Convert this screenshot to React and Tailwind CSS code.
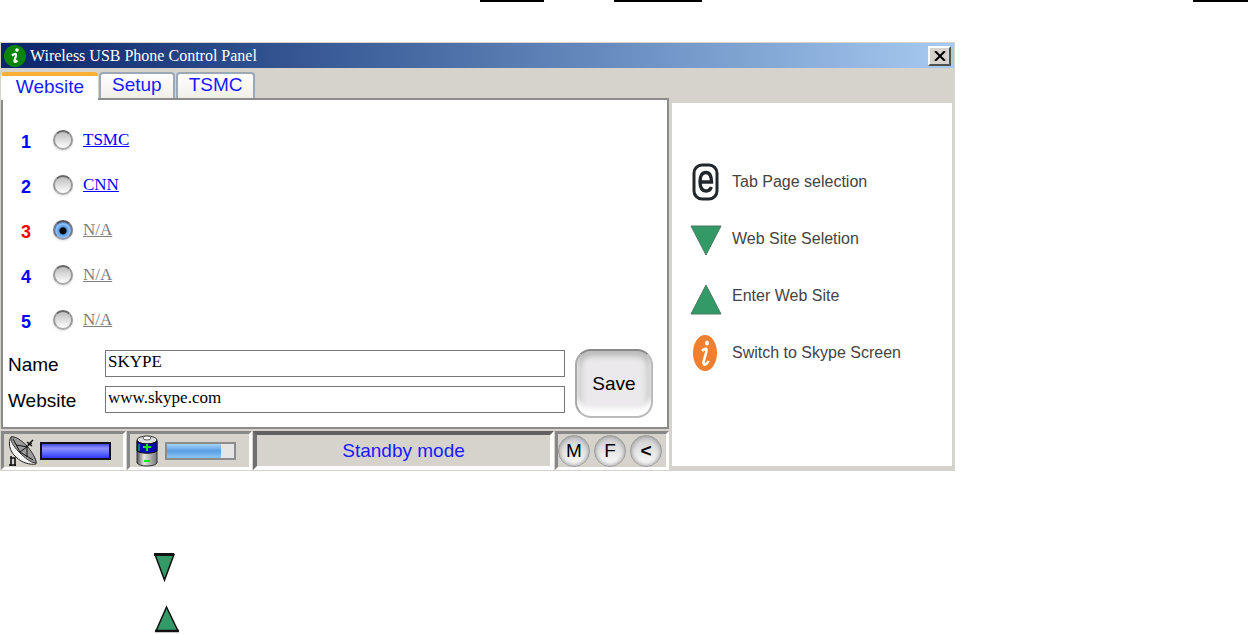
import { useState } from "react";

const tabs = ["Website", "Setup", "TSMC"];

const sites = [
  { id: 1, label: "TSMC", active: true },
  { id: 2, label: "CNN", active: true },
  { id: 3, label: "N/A", active: false },
  { id: 4, label: "N/A", active: false },
  { id: 5, label: "N/A", active: false },
];

function InfoIcon() {
  return (
    <svg width="24" height="24" viewBox="0 0 24 24" aria-hidden="true">
      <circle cx="12" cy="12" r="11" fill="#0a850a" />
      <circle cx="14" cy="6" r="1.800" fill="#fff" />
      <path d="M9 11.500C11 10 12.500 9.500 13 10.500C13.500 12 11 16 11.500 17.500C12 18.500 13.500 17.500 14.500 16.500" fill="none" stroke="#fff" strokeWidth="2.200" />
    </svg>
  );
}

function DishIcon() {
  return (
    <svg width="30" height="32" viewBox="0 0 30 32" aria-hidden="true">
      <path d="M3 2C0 7 1 16 8 22c6 6 14 8 20 7 1-4-4-11-11-18C11 5 6 1 3 2z" fill="#f4f4f4" stroke="#222" />
      <path d="M3 2c5-1 11 4 16 9 6 7 9 13 9 17-5 0-11-5-17-11C5 11 2 5 3 2z" fill="#9a9a9a" stroke="#333" />
      <path d="M5 4l7 13 12-9M12 17l13 8M19 10v12M8 10l12 2" stroke="#111" fill="none" />
      <path d="M20 10l5-5M19 7l5 4" stroke="#111" strokeWidth="1.500" />
      <path d="M3 21v10M3 23h4v8M1 30h7" stroke="#111" strokeWidth="1.600" fill="none" />
    </svg>
  );
}

function BatteryIcon() {
  return (
    <svg width="22" height="32" viewBox="0 0 22 32" aria-hidden="true">
      <defs>
        <linearGradient id="cell" x1="0" x2="1">
          <stop offset="0" stopColor="#555" />
          <stop offset=".35" stopColor="#e5e5e5" />
          <stop offset="1" stopColor="#777" />
        </linearGradient>
      </defs>
      <path d="M1 5v23c2 4 18 4 20 0V5z" fill="url(#cell)" stroke="#333" />
      <ellipse cx="11" cy="5" rx="10" ry="4" fill="#ddd" stroke="#333" />
      <ellipse cx="11" cy="3" rx="4" ry="2" fill="#fff" stroke="#555" />
      <path d="M1 6c4 4 16 4 20 0v10c-4 3-16 3-20 0z" fill="#0505b5" stroke="#111" />
      <path d="M11 9v7M7 12h8M8 26h6" stroke="#14e614" strokeWidth="2" />
      <path d="M3 9v7" stroke="#0c7a7a" strokeWidth="2" />
    </svg>
  );
}

function KeyIcon() {
  return (
    <svg width="32" height="38" viewBox="0 0 32 38" aria-hidden="true">
      <rect x="4" y="2" width="23" height="34" rx="8" fill="#fff" stroke="#20282c" strokeWidth="3" />
      <path d="M10 19H21.500C21.500 12.500 19.500 9.500 16 9.500C12 9.500 10 13 10 18.500C10 25 12 28 16 28C18.500 28 20.500 26.500 21.300 24" fill="none" stroke="#20282c" strokeWidth="3.400" />
    </svg>
  );
}

function DownIcon() {
  return (
    <svg width="32" height="38" viewBox="0 0 32 38" aria-hidden="true">
      <path d="M1 6h30L16 35z" fill="#339966" stroke="#4a7a62" />
    </svg>
  );
}

function UpIcon() {
  return (
    <svg width="32" height="38" viewBox="0 0 32 38" aria-hidden="true">
      <path d="M1 37h30L16 8z" fill="#339966" stroke="#4a7a62" />
    </svg>
  );
}

function OrangeInfoIcon() {
  return (
    <svg width="32" height="38" viewBox="0 0 32 38" aria-hidden="true">
      <ellipse cx="15" cy="19" rx="12" ry="18" fill="#f08030" />
      <ellipse cx="17" cy="9" rx="2" ry="2.500" fill="#fff" />
      <path d="M12 17C14 15 16 14 16.500 15.500C17 18 13.500 26 13.500 29C14 32.500 17 30 18.500 27" fill="none" stroke="#fff" strokeWidth="2.600" />
    </svg>
  );
}

const hints = [
  { icon: <KeyIcon />, text: "Tab Page selection" },
  { icon: <DownIcon />, text: "Web Site Seletion" },
  { icon: <UpIcon />, text: "Enter Web Site" },
  { icon: <OrangeInfoIcon />, text: "Switch to Skype Screen" },
];

function App() {
  const [tab, setTab] = useState("Website");
  const [selected, setSelected] = useState(3);
  const [name, setName] = useState("SKYPE");
  const [website, setWebsite] = useState("www.skype.com");

  return (
    <div className="overflow-hidden bg-white font-['Liberation_Sans',Arial,sans-serif] text-[19px] leading-6 text-black">
      <div className="flex h-[2px] pl-[480px]">
        <div className="w-16 bg-black"></div>
        <div className="ml-[70px] w-[88px] bg-black"></div>
        <div className="ml-auto w-[55px] bg-black"></div>
      </div>

      <main className="mt-10 w-full max-w-[955px] border border-[#d6d3cd] bg-[#d6d3cd]">
        <header className="flex h-[25px] items-center bg-linear-to-r from-[#0a246a] to-[#a6caf0] pr-[3px] pl-[2px]">
          <InfoIcon />
          <h1 className="ml-[3px] font-['Liberation_Serif',serif] text-base text-white">
            Wireless USB Phone Control Panel
          </h1>
          <button
            aria-label="Close"
            className="ml-auto flex h-5 w-[23px] items-center justify-center border-2 border-t-white border-r-[#505050] border-b-[#505050] border-l-white bg-[#d6d3cd]"
          >
            <svg width="12" height="10" viewBox="0 0 12 10" aria-hidden="true">
              <path d="M1 0l10 10M11 0L1 10" stroke="#000" strokeWidth="2" />
            </svg>
          </button>
        </header>

        <div className="flex">
          <div className="min-w-0 flex-1">
            <nav className="flex h-[30px] items-end gap-px pt-1">
              {tabs.map((item) => (
                <button
                  key={item}
                  onClick={() => setTab(item)}
                  className={`flex justify-center rounded-t leading-[22px] text-[#1a1aff] ${
                    item === tab
                      ? "relative -mb-[2px] h-7 w-[97px] border-t-4 border-l border-t-[#fbb034] border-l-white bg-white"
                      : "h-[26px] border-2 border-b-0 border-[#9aa9b5] bg-linear-to-b from-white to-[#f1efe9] px-[11px]"
                  }`}
                >
                  {item}
                </button>
              ))}
            </nav>

            <section className="border-2 border-[#8c8c8c] bg-white pt-[17px] pb-[9px]">
              <ul>
                {sites.map((site) => (
                  <li key={site.id} className="flex h-[45px] items-center pl-[18px]">
                    <label
                      htmlFor={`site-${site.id}`}
                      className={`w-8 pt-1 text-lg font-bold ${site.id === selected ? "text-[#ff0000]" : "text-[#0000ff]"}`}
                    >
                      {site.id}
                    </label>
                    <input
                      type="radio"
                      name="site"
                      id={`site-${site.id}`}
                      checked={site.id === selected}
                      onChange={() => setSelected(site.id)}
                      className="h-5 w-5 appearance-none rounded-full border-2 border-t-[#666] border-r-[#999] border-b-[#aaa] border-l-[#999] bg-linear-to-b from-[#bdbdbd] to-white shadow-sm checked:border-t-[#555] checked:border-r-[#778] checked:border-b-[#99a] checked:border-l-[#778] checked:bg-[radial-gradient(circle_at_50%_55%,#000_3px,#5b95da_4px,#8cc4ff_7px,#4a70b0_9px)]"
                    />
                    <a
                      href="#"
                      className={`ml-2.5 font-['Liberation_Serif',serif] text-[17px] underline ${site.active ? "text-[#0000ff]" : "text-[#808080]"}`}
                    >
                      {site.label}
                    </a>
                  </li>
                ))}
              </ul>

              <form className="flex pt-[7px] pr-3.5 pl-[5px]" onSubmit={(e) => e.preventDefault()}>
                <div className="flex flex-1 flex-col gap-[9px] pt-px">
                  <div className="flex">
                    <label htmlFor="name" className="w-[97px] pt-[3px]">Name</label>
                    <input
                      id="name"
                      value={name}
                      onChange={(e) => setName(e.target.value)}
                      className="h-[27px] min-w-0 flex-1 border border-[#777] pb-1 pl-0.5 font-['Liberation_Serif',serif] text-[17px] outline-none"
                    />
                  </div>
                  <div className="flex">
                    <label htmlFor="website" className="w-[97px] pt-[3px]">Website</label>
                    <input
                      id="website"
                      value={website}
                      onChange={(e) => setWebsite(e.target.value)}
                      className="h-[27px] min-w-0 flex-1 border border-[#777] pb-1 pl-0.5 font-['Liberation_Serif',serif] text-[17px] outline-none"
                    />
                  </div>
                </div>
                <button className="ml-2.5 h-[69px] w-[78px] rounded-2xl border-2 border-t-[#888] border-r-[#bbb] border-b-[#bbb] border-l-[#aaa] bg-[#ebe9eb] shadow-[inset_0_-8px_5px_#fff,inset_0_5px_6px_#bbb,inset_4px_0_6px_#ccc,inset_-4px_0_6px_#ccc]">
                  Save
                </button>
              </form>
            </section>

            <footer className="mt-0.5 flex h-[39px] gap-px">
              <div className="flex w-[125px] items-center border-3 border-t-[#888] border-r-white border-b-white border-l-[#888] pl-1">
                <DishIcon />
                <div className="ml-0.5 h-[18px] w-[71px] border-2 border-[#111] bg-linear-to-b from-[#4444dd] via-[#9090ff] via-30% to-[#3333ff]"></div>
              </div>
              <div className="flex w-[125px] items-center border-3 border-t-[#888] border-r-white border-b-white border-l-[#888] pl-1.5">
                <BatteryIcon />
                <div className="ml-[7px] h-[18px] w-[71px] border-2 border-[#8c8c8c] bg-[#e5e5e5]">
                  <div className="h-full w-4/5 bg-linear-to-b from-[#a5d2fa] via-[#5a9fe2] to-[#8ac6f8]"></div>
                </div>
              </div>
              <div className="flex flex-1 items-center justify-center border-4 border-t-[#606060] border-r-white border-b-white border-l-[#707070] text-[#1a1aff]">
                Standby mode
              </div>
              <div className="flex items-center gap-1 border-3 border-t-[#888] border-r-white border-b-white border-l-[#888] pr-1">
                {["M", "F", "<"].map((key) => (
                  <button
                    key={key}
                    className={`h-8 w-8 rounded-full border border-[#999] bg-linear-to-b from-[#ccc] to-white shadow-[inset_0_0_5px_#888] ${key === "<" ? "font-bold" : ""}`}
                  >
                    {key}
                  </button>
                ))}
              </div>
            </footer>
          </div>

          <aside className="mt-[35px] mr-0.5 mb-1 ml-[3px] w-[280px] bg-white pt-[50px]">
            <ul>
              {hints.map((hint) => (
                <li
                  key={hint.text}
                  className="flex h-[57px] items-center pl-[18px] text-base text-[#444]"
                >
                  {hint.icon}
                  <span className="ml-2.5">{hint.text}</span>
                </li>
              ))}
            </ul>
          </aside>
        </div>
      </main>

      <div className="mt-[82px] ml-[154px] flex flex-col gap-[22px]">
        <svg width="22" height="30" viewBox="0 0 22 30" aria-hidden="true">
          <path d="M1 1.500h19L10.500 27z" fill="#339966" stroke="#111" strokeWidth="1.500" />
          <path d="M0 1.500h20" stroke="#111" strokeWidth="3" />
        </svg>
        <svg width="26" height="28" viewBox="0 0 26 28" aria-hidden="true">
          <path d="M2 26h22L12.500 2z" fill="#339966" stroke="#111" strokeWidth="1.500" />
          <path d="M1 26h24" stroke="#111" strokeWidth="2.500" />
        </svg>
      </div>
    </div>
  );
}

export default App;
